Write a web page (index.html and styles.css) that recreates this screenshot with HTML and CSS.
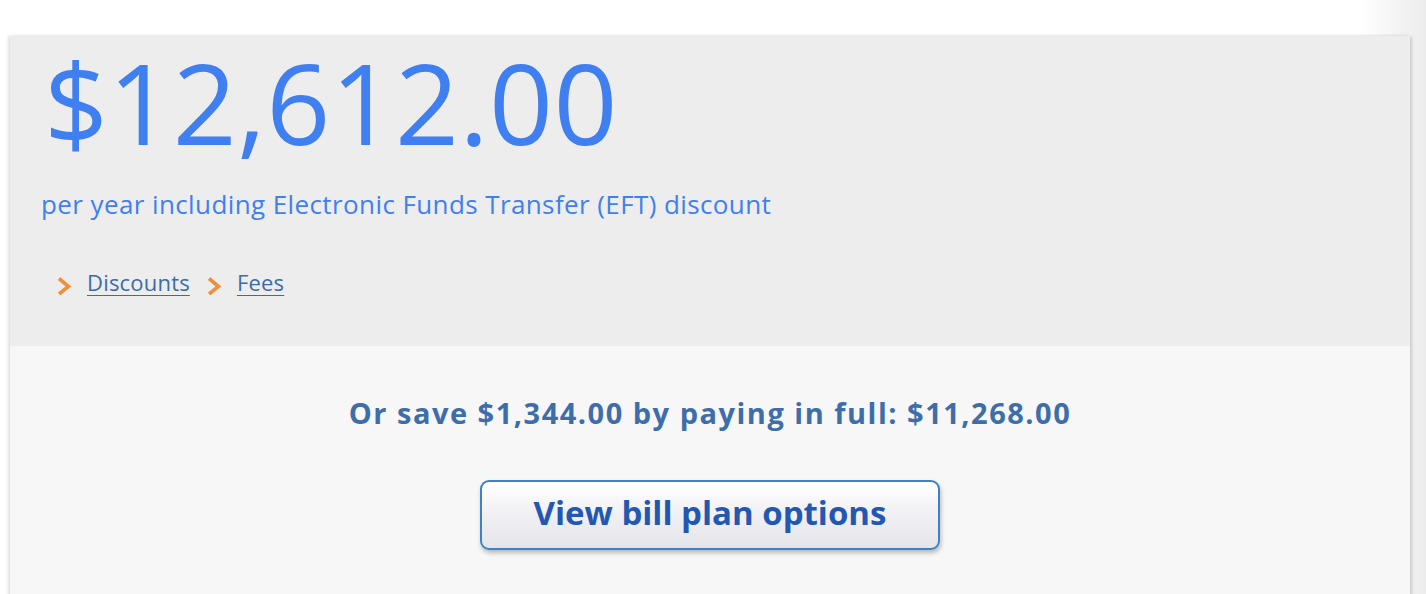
FILE: index.html
```html
<!DOCTYPE html>
<html>
<head>
<meta charset="utf-8">
<link rel="stylesheet" href="styles.css">
</head>
<body>
<div class="page">
  <div class="panel">
    <div class="top">
      <div class="amount">$12,612.00</div>
      <div class="sub">per year including Electronic Funds Transfer (EFT) discount</div>
      <div class="links">
        <span class="chev"><svg width="15" height="18" viewBox="0 0 15 18"><path d="M2 1.5 L11.5 9.5 L2 17" fill="none" stroke="#f0903a" stroke-width="3.6"/></svg></span>
        <a href="#" class="link">Discounts</a>
        <span class="chev"><svg width="15" height="18" viewBox="0 0 15 18"><path d="M2 1.5 L11.5 9.5 L2 17" fill="none" stroke="#f0903a" stroke-width="3.6"/></svg></span>
        <a href="#" class="link">Fees</a>
      </div>
    </div>
    <div class="bottom">
      <div class="save">Or save $1,344.00 by paying in full: $11,268.00</div>
      <button class="btn">View bill plan options</button>
    </div>
  </div>
</div>
</body>
</html>
```
FILE: styles.css
```css
html, body {
  margin: 0;
  padding: 0;
  height: 100%;
}
body {
  background: linear-gradient(to right, #ffffff 0, #ffffff 1360px, #f3f3f3 1400px, #ececec 1426px);
  font-family: "Open Sans", "Noto Sans", sans-serif;
  overflow: hidden;
}
.page {
  padding: 36px 16px 0 10px;
}
.panel {
  width: 1400px;
  box-shadow: -2px 0 3px rgba(0,0,0,0.12), 2px 1px 3px rgba(0,0,0,0.15);
}
.top {
  background: #ededed;
  height: 310px;
  box-sizing: border-box;
  padding: 2px 0 0 31px;
}
.amount {
  font-size: 112px;
  line-height: 128px;
  color: #3f7ff0;
  letter-spacing: 0.3px;
  padding-left: 3px;
}
.sub {
  font-size: 26px;
  color: #3f7ff0;
  margin-top: 21px;
  line-height: 34px;
  letter-spacing: 0.4px;
}
.links {
  display: flex;
  align-items: center;
  margin-top: 46px;
  padding-left: 16px;
}
.chev {
  display: inline-flex;
  width: 15px;
  height: 18px;
  margin-right: 15px;
  margin-top: 7px;
}
.link {
  font-size: 22px;
  color: #3b6ca8;
  letter-spacing: 0.2px;
  text-decoration: underline;
  text-underline-offset: 4px;
  text-decoration-thickness: 1px;
  margin-right: 17px;
}
.bottom {
  background: #f7f7f7;
  height: 260px;
  display: flex;
  flex-direction: column;
  align-items: center;
  padding-top: 46px;
  box-sizing: border-box;
}
.save {
  font-size: 29px;
  font-weight: 700;
  color: #3d6eaa;
  line-height: 42px;
  letter-spacing: 1.5px;
}
.btn {
  margin-top: 46px;
  width: 460px;
  height: 70px;
  border: 2px solid #3c82c8;
  border-radius: 9px;
  background: linear-gradient(to bottom, #ffffff 0%, #f0f0f4 50%, #e4e4ea 100%);
  box-shadow: 1px 3px 4px rgba(0,0,0,0.25);
  font-family: "Open Sans", "Noto Sans", sans-serif;
  font-size: 33px;
  font-weight: 700;
  color: #2358b2;
  padding: 0 0 5px 0;
}
```
